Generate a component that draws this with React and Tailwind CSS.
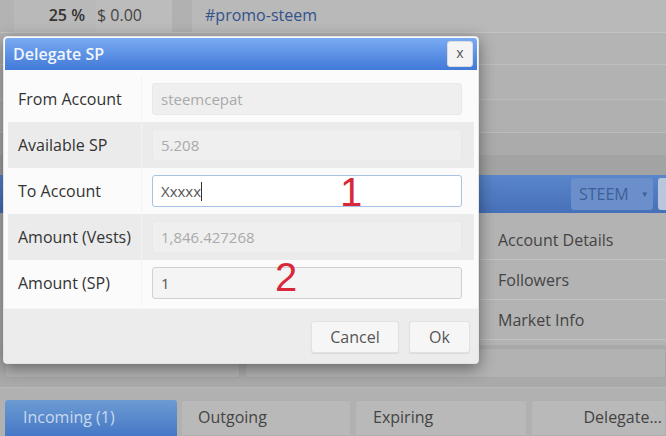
import React from "react";

const font = { fontFamily: '"Open Sans", "Noto Sans", sans-serif' };

function Row({ label, children, shaded }) {
  return (
    <div className={`flex h-[46px] items-center ${shaded ? "bg-[#ebebeb]" : "bg-[#fbfbfb]"}`}>
      <div className="w-[134px] shrink-0 h-full flex items-center pl-[10px] text-[16px] text-[#333] border-r border-[#f3f3f3]">
        {label}
      </div>
      <div className="flex-1 pl-[10px] pr-[12px]">{children}</div>
    </div>
  );
}

function Disabled({ value }) {
  return (
    <div className="h-[32px] rounded-[3px] bg-[#efefef] border border-[#e9e9e9] flex items-center pl-[8px] text-[15px] text-[#aaaaaa]">
      {value}
    </div>
  );
}

export default function App() {
  return (
    <div className="relative w-[666px] h-[436px] overflow-hidden bg-[#adadad]" style={font}>
      {/* Background page */}
      <div className="flex flex-col h-full">
        <div className="flex h-[33px] bg-[#b9b9b9] border-b border-[#c3c3c3]">
          <div className="w-[14px] bg-[#b3b3b3]" />
          <div className="w-[82px] flex items-center justify-end pr-[11px] pb-[2px] text-[16px] font-semibold text-[#333]">25 %</div>
          <div className="w-[76px] flex items-center pl-[1px] pb-[2px] text-[16px] text-[#444] bg-[#bcbcbc]">$ 0.00</div>
          <div className="w-[20px] bg-[#b1b1b1]" />
          <div className="flex-1 flex items-center pl-[13px] pb-[2px] text-[16px] text-[#34528c]">#promo-steem</div>
        </div>
        <div className="h-[32px] bg-[#b4b4b4] border-b border-[#bfbfbf]" />
        <div className="h-[35px] bg-[#b2b2b2] border-b border-[#bcbcbc]" />
        <div className="h-[33px] bg-[#b0b0b0] border-b border-[#bbbbbb]" />
        <div className="h-[22px] bg-[#ababab]" />
        <div className="h-[20px] bg-[#a3a3a3]" />
        <div className="h-[38px] bg-gradient-to-b from-[#5a86cc] to-[#4670b8] flex items-center justify-end gap-[5px]">
          <div className="w-[82px] h-[32px] rounded-[3px] bg-[#6a8fcb] flex items-center pl-[8px] text-[16px] text-[#3e5f96]">
            STEEM<span className="ml-[12px] text-[8px]">▼</span>
          </div>
          <div className="w-[8px] h-[32px] rounded-l-[3px] bg-[#b9c6dc]" />
        </div>
        <div className="flex h-[132px]">
          <div className="w-[480px]" />
          <div className="flex-1 flex flex-col bg-[#b3b3b3]">
            <div className="h-[47px] pt-[15px] pl-[18px] text-[16px] text-[#444] border-b border-[#c2c2c2]">Account Details</div>
            <div className="h-[40px] flex items-center pl-[18px] text-[16px] text-[#444] border-b border-[#c2c2c2]">Followers</div>
            <div className="h-[40px] flex items-center pl-[18px] text-[16px] text-[#444] border-b border-[#c2c2c2]">Market Info</div>
          </div>
        </div>
        <div className="flex gap-[5px] pl-[5px] h-[42px] bg-[#a9a9a9]">
          <div className="w-[235px] h-[30px] mt-[3px] rounded-b-[3px] bg-[#b2b2b2] border border-[#a6a6a6]" />
          <div className="flex-1 h-[30px] mt-[3px] rounded-b-[3px] bg-[#b2b2b2] border border-[#a6a6a6]" />
        </div>
        <div className="h-[13px] bg-[#b1b1b1] border-t border-[#b8b8b8]" />
        <div className="flex-1 flex gap-[4px] px-[5px] bg-[#b1b1b1]">
          <div className="w-[172px] rounded-t-[3px] bg-gradient-to-b from-[#6c9bd2] to-[#4678c6] flex items-center pl-[18px] pb-[2px] text-[16px] text-[#c9d9ef]">
            Incoming (1)
          </div>
          <div className="w-[170px] rounded-t-[3px] bg-[#b9b9b9] border border-[#b0b0b0] flex items-center pl-[16px] pb-[2px] text-[16px] text-[#444]">
            Outgoing
          </div>
          <div className="w-[172px] rounded-t-[3px] bg-[#b9b9b9] border border-[#b0b0b0] flex items-center pl-[17px] pb-[2px] text-[16px] text-[#444]">
            Expiring
          </div>
          <div className="flex-1 mr-[-5px] rounded-t-[3px] bg-[#b9b9b9] border border-[#b0b0b0] flex items-center justify-end pr-[3px] pb-[2px] text-[16px] text-[#444]">
            Delegate...
          </div>
        </div>
      </div>

      {/* Modal */}
      <div className="absolute left-[3px] top-[36px] w-[476px] h-[328px] rounded-[4px] bg-[#fbfbfb] border border-[#e4e4e4] shadow-[0_4px_16px_rgba(0,0,0,0.45)] flex flex-col overflow-hidden">
        <div className="h-[32px] mx-[1px] mt-[1px] rounded-t-[3px] bg-gradient-to-b from-[#7aaaf2] to-[#4079d8] flex items-center justify-between pl-[8px] pr-[4px]">
          <span className="text-[16px] font-semibold text-[#f2f6fc]">Delegate SP</span>
          <div className="w-[26px] h-[26px] rounded-[3px] bg-[#f4f4f4] border border-[#dcdcdc] flex items-center justify-center text-[14px] text-[#555] leading-none pb-[2px]">
            x
          </div>
        </div>
        <div className="flex flex-col mx-[4px] mt-[6px]">
          <Row label="From Account">
            <Disabled value="steemcepat" />
          </Row>
          <Row label="Available SP" shaded>
            <Disabled value="5.208" />
          </Row>
          <Row label="To Account">
            <div className="h-[32px] rounded-[3px] bg-white border border-[#a9c2e2] flex items-center pl-[8px] text-[15px] text-[#555]">
              Xxxxx<span className="w-[1px] h-[19px] bg-[#333]" />
            </div>
          </Row>
          <Row label="Amount (Vests)" shaded>
            <Disabled value="1,846.427268" />
          </Row>
          <Row label="Amount (SP)">
            <div className="h-[32px] rounded-[3px] bg-[#f4f4f4] border border-[#d0d0d0] flex items-center pl-[8px] text-[15px] text-[#555]">
              1
            </div>
          </Row>
        </div>
        <div className="flex-1 mt-[2px] bg-[#ececec] border-t border-[#f6f6f6] flex items-start justify-end gap-[10px] pt-[12px] pr-[8px]">
          <div className="w-[88px] h-[32px] rounded-[3px] bg-[#f6f6f6] border border-[#e2e2e2] shadow-[0_1px_1px_rgba(0,0,0,0.08)] flex items-center justify-center text-[16px] text-[#555]">
            Cancel
          </div>
          <div className="w-[61px] h-[32px] rounded-[3px] bg-[#f6f6f6] border border-[#e2e2e2] shadow-[0_1px_1px_rgba(0,0,0,0.08)] flex items-center justify-center text-[16px] text-[#555]">
            Ok
          </div>
        </div>
      </div>

      {/* Red annotations */}
      <span className="absolute left-[340px] top-[172px] text-[40px] leading-none text-[#d8283a]" style={{ fontFamily: '"Liberation Sans", sans-serif' }}>1</span>
      <span className="absolute left-[275px] top-[257px] text-[40px] leading-none text-[#d8283a]" style={{ fontFamily: '"Liberation Sans", sans-serif' }}>2</span>
    </div>
  );
}
